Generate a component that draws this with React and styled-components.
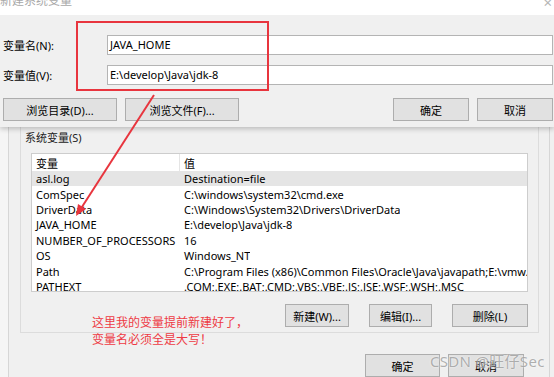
import styled, { createGlobalStyle } from "styled-components";

const GlobalStyle = createGlobalStyle`
  html, body {
    margin: 0;
    padding: 0;
    background: #f0f0f0;
  }
  * { box-sizing: border-box; }
`;

const rows = [
  ["asl.log", "Destination=file"],
  ["ComSpec", "C:\\windows\\system32\\cmd.exe"],
  ["DriverData", "C:\\Windows\\System32\\Drivers\\DriverData"],
  ["JAVA_HOME", "E:\\develop\\Java\\jdk-8"],
  ["NUMBER_OF_PROCESSORS", "16"],
  ["OS", "Windows_NT"],
  ["Path", "C:\\Program Files (x86)\\Common Files\\Oracle\\Java\\javapath;E:\\vmw..."],
  ["PATHEXT", ".COM;.EXE;.BAT;.CMD;.VBS;.VBE;.JS;.JSE;.WSF;.WSH;.MSC"],
];

const Chevron = ({ down }) => (
  <svg width="8" height="5" viewBox="0 0 8 5">
    <path d={down ? "M1 1 L4 4 L7 1" : "M1 4 L4 1 L7 4"} fill="none" stroke="#606060" strokeWidth="1.2" />
  </svg>
);

const App = () => {
  return (
    <Screen>
      <GlobalStyle />
      <Dialog>
        <TitleBar>
          <Title>新建系统变量</Title>
          <Close>×</Close>
        </TitleBar>
        <DialogBody>
          <Field>
            <Label>变量名(N):</Label>
            <Input>JAVA_HOME</Input>
          </Field>
          <Field>
            <Label>变量值(V):</Label>
            <Input>E:\develop\Java\jdk-8</Input>
          </Field>
          <ButtonRow>
            <Button $w={114}>浏览目录(D)...</Button>
            <Button $w={114}>浏览文件(F)...</Button>
            <Spacer />
            <Button $w={76}>确定</Button>
            <Button $w={76}>取消</Button>
          </ButtonRow>
        </DialogBody>
      </Dialog>

      <BackWindow>
        <LeftStrip />
        <WindowInner>
          <GroupBox>
            <GroupLabel>系统变量(S)</GroupLabel>
            <ListView>
              <ListMain>
                <HeaderRow>
                  <NameCell $head>变量</NameCell>
                  <ValueCell>值</ValueCell>
                </HeaderRow>
                {rows.map(([k, v], i) => (
                  <Row key={k} $selected={i === 0}>
                    <NameCell>{k}</NameCell>
                    <ValueCell>{v}</ValueCell>
                  </Row>
                ))}
              </ListMain>
              <ScrollBar>
                <Arrow><Chevron /></Arrow>
                <Thumb />
                <TrackFill />
                <Arrow><Chevron down /></Arrow>
              </ScrollBar>
            </ListView>
            <ListButtons>
              <Button $w={64}>新建(W)...</Button>
              <Button $w={63}>编辑(I)...</Button>
              <Button $w={76}>删除(L)</Button>
            </ListButtons>
          </GroupBox>
          <FooterButtons>
            <Button $w={75}>确定</Button>
            <Button $w={76}>取消</Button>
          </FooterButtons>
        </WindowInner>
      </BackWindow>

      <Annotation>
        这里我的变量提前新建好了，
        <br />
        变量名必须全是大写！
      </Annotation>

      <Overlay width="554" height="377" viewBox="0 0 554 377">
        <rect x="77" y="22" width="191" height="68" fill="none" stroke="#e8353e" strokeWidth="2" />
        <line x1="154" y1="95" x2="80" y2="210" stroke="#e8353e" strokeWidth="2" />
        <path d="M76 216 L78 204 L86 209 Z" fill="#e8353e" />
      </Overlay>

      <Watermark>CSDN @旺仔Sec</Watermark>
    </Screen>
  );
};

const Screen = styled.div`
  position: relative;
  width: 554px;
  height: 377px;
  overflow: hidden;
  background: #f0f0f0;
  font-family: "Noto Sans", "Noto Sans CJK SC", sans-serif;
  font-size: 11px;
  color: #000;
`;

const Dialog = styled.div`
  position: relative;
  z-index: 2;
  background: #f0f0f0;
  box-shadow: 0 2px 5px rgba(0, 0, 0, 0.22);
`;

const TitleBar = styled.div`
  height: 15px;
  background: #fff;
  display: flex;
  justify-content: space-between;
  overflow: hidden;
`;

const Title = styled.span`
  margin-top: -9px;
  font-size: 12px;
  color: #a8a8a8;
`;

const Close = styled.span`
  margin-top: -8px;
  margin-right: 2px;
  font-size: 15px;
  color: #b5b5b5;
`;

const DialogBody = styled.div`
  padding: 20px 1px 6px 3px;
  display: flex;
  flex-direction: column;
`;

const Field = styled.div`
  display: flex;
  align-items: center;
  height: 20px;
  margin-bottom: 10px;
`;

const Label = styled.div`
  width: 104px;
`;

const Input = styled.div`
  flex: 1;
  height: 20px;
  background: #fff;
  border: 1px solid #b4b4b4;
  padding: 0 2px;
  line-height: 18px;
`;

const ButtonRow = styled.div`
  display: flex;
  gap: 8px;
  margin-top: 3px;
`;

const Spacer = styled.div`
  flex: 1;
`;

const Button = styled.div`
  width: ${(p) => p.$w}px;
  height: 23px;
  background: #e1e1e1;
  border: 1px solid #adadad;
  display: flex;
  align-items: center;
  justify-content: center;
  flex-shrink: 0;
`;

const BackWindow = styled.div`
  display: flex;
  height: 250px;
`;

const LeftStrip = styled.div`
  width: 9px;
  background: #f5f5f5;
  border-right: 1px solid #d6d6d6;
`;

const WindowInner = styled.div`
  width: 541px;
  border-right: 1px solid #d6d6d6;
  padding-left: 11px;
  padding-right: 10px;
  display: flex;
  flex-direction: column;
`;

const GroupBox = styled.div`
  height: 211px;
  border: 1px solid #dcdcdc;
  border-top: none;
  padding: 4px 10px 0 10px;
  display: flex;
  flex-direction: column;
`;

const GroupLabel = styled.div`
  height: 22px;
  line-height: 14px;
  margin-left: -6px;
  color: #222;
`;

const ListView = styled.div`
  display: flex;
  height: 139px;
  background: #fff;
  border: 1px solid #cdcdcd;
  overflow: hidden;
`;

const ListMain = styled.div`
  flex: 1;
  display: flex;
  flex-direction: column;
`;

const HeaderRow = styled.div`
  display: flex;
  height: 17px;
  flex-shrink: 0;
  align-items: center;
`;

const Row = styled.div`
  display: flex;
  height: 15.4px;
  flex-shrink: 0;
  align-items: center;
  background: ${(p) => (p.$selected ? "#e5e5e5" : "transparent")};
  white-space: nowrap;
`;

const NameCell = styled.div`
  width: 148px;
  padding-left: 4px;
  flex-shrink: 0;
  height: 100%;
  display: flex;
  align-items: center;
  border-right: ${(p) => (p.$head ? "1px solid #e5e5e5" : "none")};
`;

const ValueCell = styled.div`
  padding-left: 4px;
  overflow: hidden;
  white-space: nowrap;
`;

const ScrollBar = styled.div`
  width: 14px;
  display: flex;
  flex-direction: column;
  align-items: center;
  background: #f4f4f4;
  margin-right: 1px;
`;

const Arrow = styled.div`
  height: 15px;
  display: flex;
  align-items: center;
  justify-content: center;
`;

const Thumb = styled.div`
  width: 12px;
  height: 40px;
  background: #cdcdcd;
`;

const TrackFill = styled.div`
  flex: 1;
`;

const ListButtons = styled.div`
  display: flex;
  justify-content: flex-end;
  gap: 20px;
  margin-top: 12px;
`;

const FooterButtons = styled.div`
  display: flex;
  justify-content: flex-end;
  gap: 8px;
  margin-top: 21px;
  padding-right: 15px;
`;

const Annotation = styled.div`
  position: absolute;
  left: 92px;
  top: 314px;
  z-index: 3;
  font-size: 12px;
  line-height: 17px;
  color: #ee3a44;
`;

const Overlay = styled.svg`
  position: absolute;
  left: 0;
  top: 0;
  z-index: 4;
  pointer-events: none;
`;

const Watermark = styled.div`
  position: absolute;
  left: 430px;
  top: 350px;
  z-index: 5;
  font-size: 15px;
  color: rgba(150, 150, 150, 0.75);
  text-shadow: 0 0 2px rgba(255, 255, 255, 0.9);
  letter-spacing: 0.3px;
`;

export default App;
